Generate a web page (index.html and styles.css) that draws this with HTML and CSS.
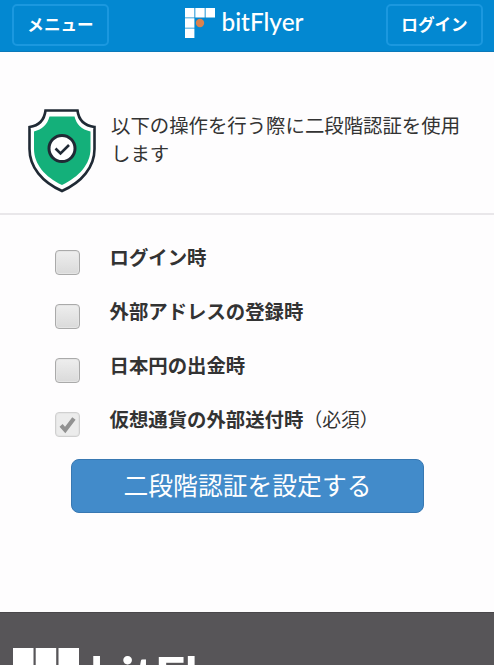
FILE: index.html
```html
<!DOCTYPE html>
<html lang="ja">
<head>
    <meta charset="UTF-8">
    <meta name="viewport" content="width=device-width, initial-scale=1">
    <title>bitFlyer</title>
    <link rel="stylesheet" href="styles.css">
</head>
<body>
    <header class="header">
        <button type="button" class="nav-btn">メニュー</button>
        <div class="logo">
            <svg class="logo-mark" viewBox="0 0 30 30">
                <path fill="#fff" d="M0 0h9.4v9.4H0zM10.3 0h9.4v9.4h-9.4zM20.6 0H30v9.4h-9.4zM0 10.3h9.4v9.4H0zM0 20.6h9.4V30H0z"/>
                <circle cx="15" cy="15" r="4.2" fill="#d9824f"/>
            </svg>
            <span class="logo-text">bitFlyer</span>
        </div>
        <button type="button" class="nav-btn">ログイン</button>
    </header>

    <section class="intro">
        <svg class="shield" viewBox="0 0 70 86">
            <path d="M18.5 2.5h32c1 8.500 6 15 17 16.500v22C67.500 59 55 74 35 83 15 74 2.500 59 2.500 41V19c10-1.500 15-8 16-16.500z" fill="#fff" stroke="#202a35" stroke-width="2.600"/>
            <path d="M22.500 8.500h25c2 8 7 13 16 15V41C63.500 56 52 69 35 77 18 69 7 56 7 41V23.500c8-2 13.500-7 15.500-15z" fill="#14b07a"/>
            <circle cx="35" cy="40.500" r="13" fill="#fff" stroke="#202a35" stroke-width="3"/>
            <path d="M28.500 40.500l5 5 8.500-8.500" fill="none" stroke="#202a35" stroke-width="2.600"/>
        </svg>
        <p>以下の操作を行う際に二段階認証を使用します</p>
    </section>

    <form class="settings">
        <label class="row">
            <input type="checkbox">
            <span><b>ログイン時</b></span>
        </label>
        <label class="row">
            <input type="checkbox">
            <span><b>外部アドレスの登録時</b></span>
        </label>
        <label class="row">
            <input type="checkbox">
            <span><b>日本円の出金時</b></span>
        </label>
        <label class="row">
            <span class="checked">
                <svg viewBox="0 0 25 25"><path d="M5.500 13.500l4.500 5L19.500 6" fill="none" stroke="#929292" stroke-width="4.500"/></svg>
            </span>
            <span><b>仮想通貨の外部送付時</b><span class="required">（必須）</span></span>
        </label>
        <button type="button" class="submit">二段階認証を設定する</button>
    </form>

    <footer class="footer">
        <svg class="footer-mark" viewBox="0 0 66 66">
            <path fill="#fff" d="M0 0h20.500v20.500H0zM22.700 0h20.500v20.500H22.700zM45.500 0H66v20.500H45.500zM0 22.700h20.500v20.500H0zM0 45.500h20.500V66H0z"/>
            <circle cx="33" cy="33" r="9" fill="#d9824f"/>
        </svg>
        <span class="footer-text">bitFlyer</span>
    </footer>
</body>
</html>
```
FILE: styles.css
```css
* {
    box-sizing: border-box;
}

body {
    margin: 0;
    height: 665px;
    overflow: hidden;
    display: flex;
    flex-direction: column;
    background: #fefdfe;
    color: #333;
    font-family: "Noto Sans CJK JP", sans-serif;
    font-size: 19.4px;
}

button {
    font-family: inherit;
    color: #fff;
    padding: 0;
}

.header {
    flex: none;
    height: 52px;
    padding: 4px 11px 0 12px;
    display: flex;
    justify-content: space-between;
    align-items: flex-start;
    background: #0388d1;
    border-bottom: 1px solid #0b79b9;
}

.nav-btn {
    width: 97px;
    height: 42px;
    border: 2px solid #1b98df;
    border-radius: 5px;
    background: none;
    font-size: 16.6px;
    font-weight: 700;
    line-height: 36px;
    padding-bottom: 2px;
}

.logo {
    display: flex;
    align-items: flex-start;
    gap: 6px;
    padding: 4px 6px 0 0;
}

.logo-mark {
    width: 30px;
    height: 30px;
}

.logo-text {
    color: #fff;
    font: 500 24.4px/28px Lato, sans-serif;
}

.intro {
    flex: none;
    height: 163px;
    padding: 56px 30px 0 27px;
    display: flex;
    gap: 14px;
    border-bottom: 2px solid #e9e7ea;
}

.intro p {
    margin: 3px 0 0;
    line-height: 28px;
}

.shield {
    flex: none;
    width: 70px;
    height: 86px;
}

.settings {
    flex: 1;
    padding: 29px 55px 0;
}

.row {
    display: flex;
    align-items: flex-start;
    gap: 29.5px;
    height: 54.1px;
    line-height: 26px;
}

.row input,
.checked {
    flex: none;
    appearance: none;
    width: 25px;
    height: 25px;
    margin: 6px 0 0;
    border: 1px solid #aaa;
    border-radius: 4px;
    background: linear-gradient(#eee, #dadada);
    box-shadow: inset 0 0 0 1px #e5e5e5;
}

.checked {
    border-color: #d0d0d0;
    background: #ececec;
}

.checked svg {
    display: block;
    width: 23px;
    height: 23px;
}

.required {
    font-size: 18.8px;
}

.submit {
    display: block;
    width: 353px;
    height: 54px;
    margin: -1px 0 0 16px;
    border: 1px solid #3878b2;
    border-radius: 8px;
    background: #428bca;
    font-size: 24.8px;
    line-height: 46px;
    padding-bottom: 5px;
}

.footer {
    flex: none;
    height: 53px;
    padding: 35px 13px 0;
    display: flex;
    align-items: flex-start;
    gap: 11px;
    overflow: hidden;
    background: #575558;
    border-top: 1px solid #49474a;
}

.footer-mark {
    flex: none;
    width: 66px;
    height: 66px;
}

.footer-text {
    color: #fff;
    font: 700 54px/56px Lato, sans-serif;
}
```
